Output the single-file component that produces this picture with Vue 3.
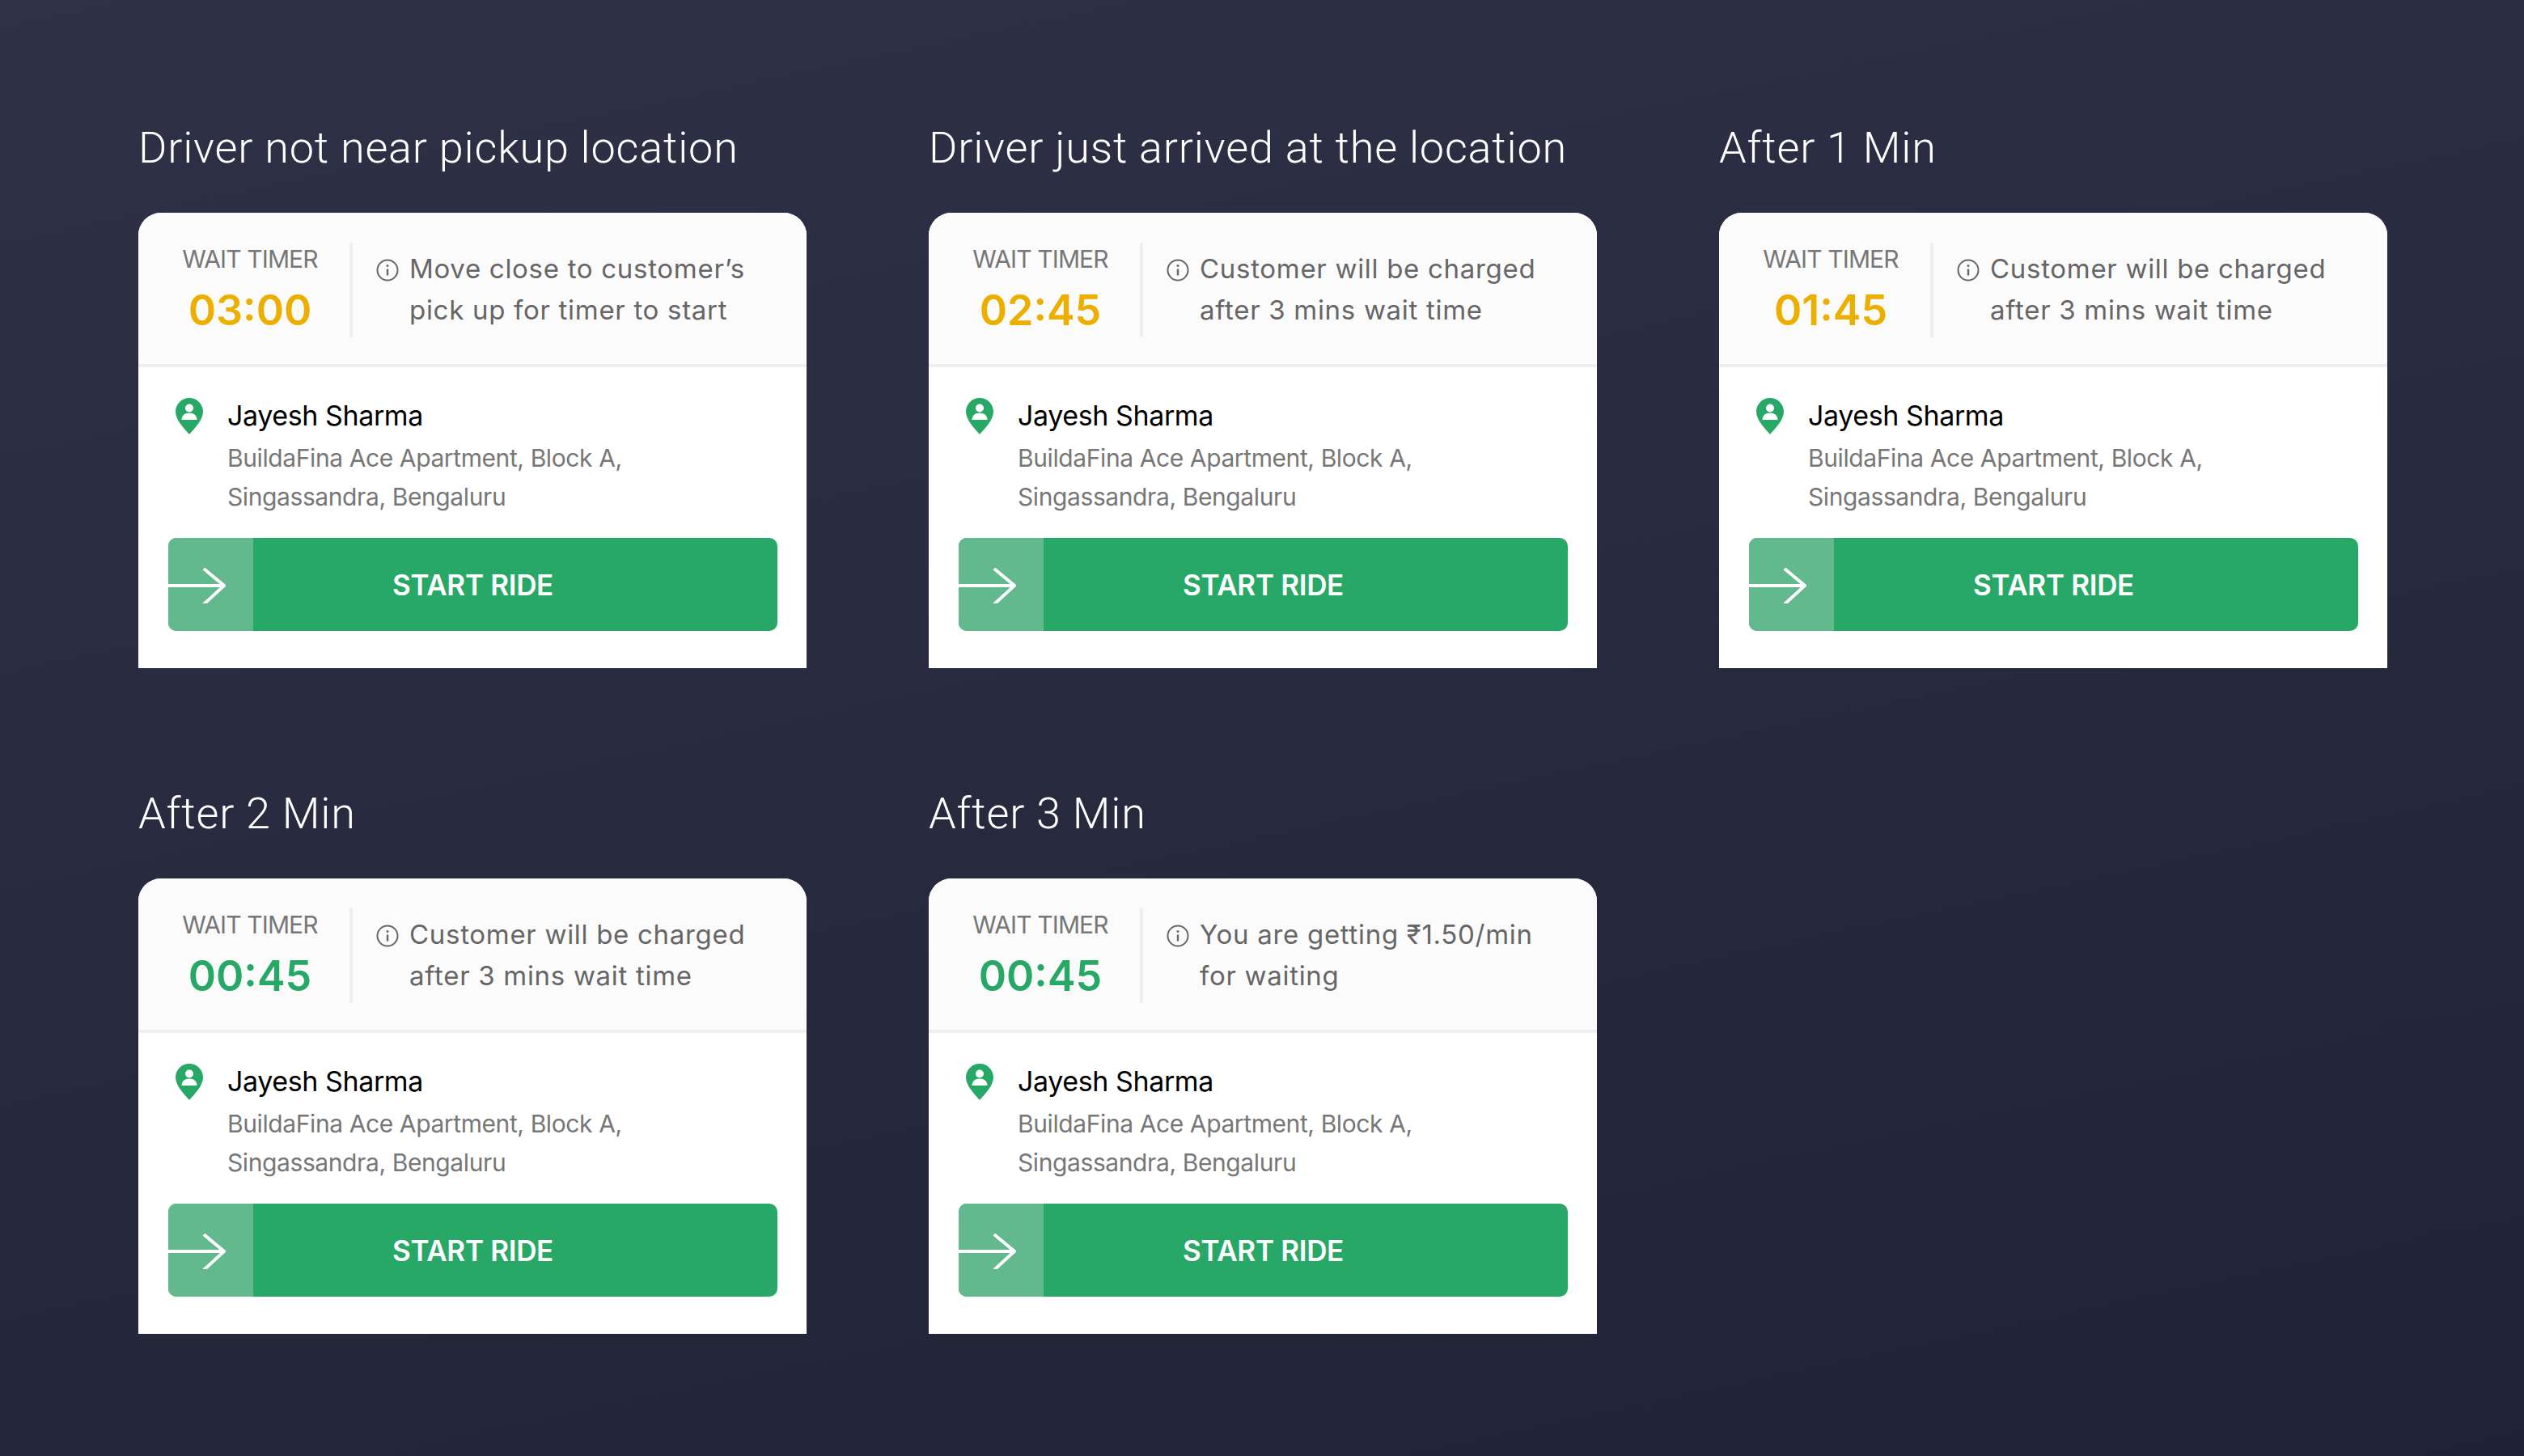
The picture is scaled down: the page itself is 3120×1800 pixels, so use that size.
<template>
  <main class="page">
    <section v-for="s in screens" :key="s.title" class="screen" :class="{ low: s.low }">
      <h2 class="title">{{ s.title }}</h2>
      <article class="card">
        <header class="head">
          <div class="timer">
            <span class="timer-label">WAIT TIMER</span>
            <span class="timer-value" :class="s.tone">{{ s.time }}</span>
          </div>
          <div class="note">
            <svg class="info" viewBox="0 0 28 28" fill="none" stroke="#666" stroke-width="2">
              <circle cx="14" cy="14" r="12.5" />
              <path d="M14 12.5v8" stroke-width="2.4" />
              <circle cx="14" cy="8.4" r="1.5" fill="#666" stroke="none" />
            </svg>
            <p class="note-text">{{ s.line1 }}<br />{{ s.line2 }}</p>
          </div>
        </header>
        <div class="body">
          <div class="rider">
            <svg class="pin" viewBox="0 0 34 45">
              <path d="M17 0C7.6 0 0 7.5 0 16.8 0 27.5 10.5 37.5 17 45c6.5-7.5 17-17.500 17-28.200C34 7.500 26.400 0 17 0z" fill="#27a866" />
              <circle cx="17" cy="12.500" r="5" fill="#fff" />
              <path d="M7.500 27c0-5.300 4-8.500 9.500-8.500s9.500 3.200 9.500 8.500z" fill="#fff" />
            </svg>
            <div>
              <div class="name">Jayesh Sharma</div>
              <div class="addr">BuildaFina Ace Apartment, Block A,<br />Singassandra, Bengaluru</div>
            </div>
          </div>
          <button class="ride">
            <span class="slide">
              <svg class="arrow" viewBox="0 0 72 44" fill="none" stroke="#fff" stroke-width="4">
                <path d="M0 22h69" />
                <path d="M46 2l24 20-24 22" stroke-linecap="square" />
              </svg>
            </span>
            <span class="ride-label">START RIDE</span>
          </button>
        </div>
      </article>
    </section>
  </main>
</template>

<script setup>
const charged = ['Customer will be charged', 'after 3 mins wait time']

const screens = [
  { title: 'Driver not near pickup location', time: '03:00', tone: 'amber', line1: 'Move close to customer’s', line2: 'pick up for timer to start' },
  { title: 'Driver just arrived at the location', time: '02:45', tone: 'amber', line1: charged[0], line2: charged[1] },
  { title: 'After 1 Min', time: '01:45', tone: 'amber', line1: charged[0], line2: charged[1] },
  { title: 'After 2 Min', time: '00:45', tone: 'green', line1: charged[0], line2: charged[1] },
  { title: 'After 3 Min', time: '00:45', tone: 'green', line1: 'You are getting ₹1.50/min', line2: 'for waiting', low: true },
]
</script>

<style>
html, body { margin: 0; background: #26273c; }
</style>

<style scoped>
.page {
  box-sizing: border-box;
  width: 3120px;
  height: 1800px;
  padding: 143px 171px 0;
  display: grid;
  grid-template-columns: repeat(3, 826px);
  grid-auto-rows: 683px;
  column-gap: 151px;
  row-gap: 140px;
  background: linear-gradient(168deg, #2f3147 0%, #202235 100%);
  font-family: Inter, "Noto Sans", sans-serif;
}
.title {
  margin: 0 0 40px;
  height: 80px;
  font-family: Roboto, sans-serif;
  font-size: 54px;
  font-weight: 300;
  letter-spacing: 0.8px;
  line-height: 80px;
  color: #fff;
}
.low .card { margin-top: 1px; }

.card {
  height: 563px;
  background: #fff;
  border-radius: 28px 28px 0 0;
  overflow: hidden;
}
.head {
  box-sizing: border-box;
  height: 191px;
  padding-top: 37px;
  display: flex;
  background: #fbfbfc;
  border-bottom: 4px solid #eeeff2;
}
.timer {
  box-sizing: border-box;
  width: 265px;
  height: 117px;
  padding-left: 15px;
  display: flex;
  flex-direction: column;
  align-items: center;
  border-right: 4px solid #eeeff2;
}
.timer-label {
  margin-top: -2px;
  font-size: 30px;
  line-height: 44px;
  letter-spacing: -0.9px;
  color: #777;
}
.timer-value {
  margin-top: 9px;
  font-size: 52px;
  font-weight: 600;
  line-height: 66px;
}
.amber { color: #ecaf00; }
.green { color: #27a866; }
.note {
  display: flex;
  align-items: flex-start;
  margin-left: 29px;
  gap: 13px;
}
.info {
  width: 28px;
  height: 28px;
  margin-top: 20px;
  flex: none;
}
.note-text {
  margin: 7px 0 0;
  font-size: 33px;
  line-height: 51px;
  letter-spacing: 0.7px;
  color: #666;
}
.body {
  padding: 36px 37px 0;
}
.rider {
  display: flex;
  padding-left: 9px;
  gap: 30px;
}
.pin {
  width: 34px;
  height: 45px;
  margin-top: 2px;
  flex: none;
}
.name {
  font-size: 34px;
  line-height: 48px;
  letter-spacing: -0.4px;
  color: #000;
}
.addr {
  margin-top: 4px;
  font-size: 30px;
  line-height: 48px;
  letter-spacing: -0.4px;
  color: #777;
}
.ride {
  position: relative;
  display: flex;
  align-items: center;
  justify-content: center;
  width: 753px;
  height: 115px;
  margin-top: 27px;
  padding: 0;
  border: 0;
  border-radius: 10px;
  overflow: hidden;
  background: #27a866;
  font-family: inherit;
}
.slide {
  position: absolute;
  left: 0;
  top: 0;
  width: 105px;
  height: 100%;
  display: flex;
  align-items: center;
  background: #63b98e;
}
.arrow {
  width: 71px;
  height: 44px;
  margin-top: 3px;
}
.ride-label {
  font-size: 35px;
  font-weight: 600;
  letter-spacing: -0.3px;
  color: #fff;
}
</style>
